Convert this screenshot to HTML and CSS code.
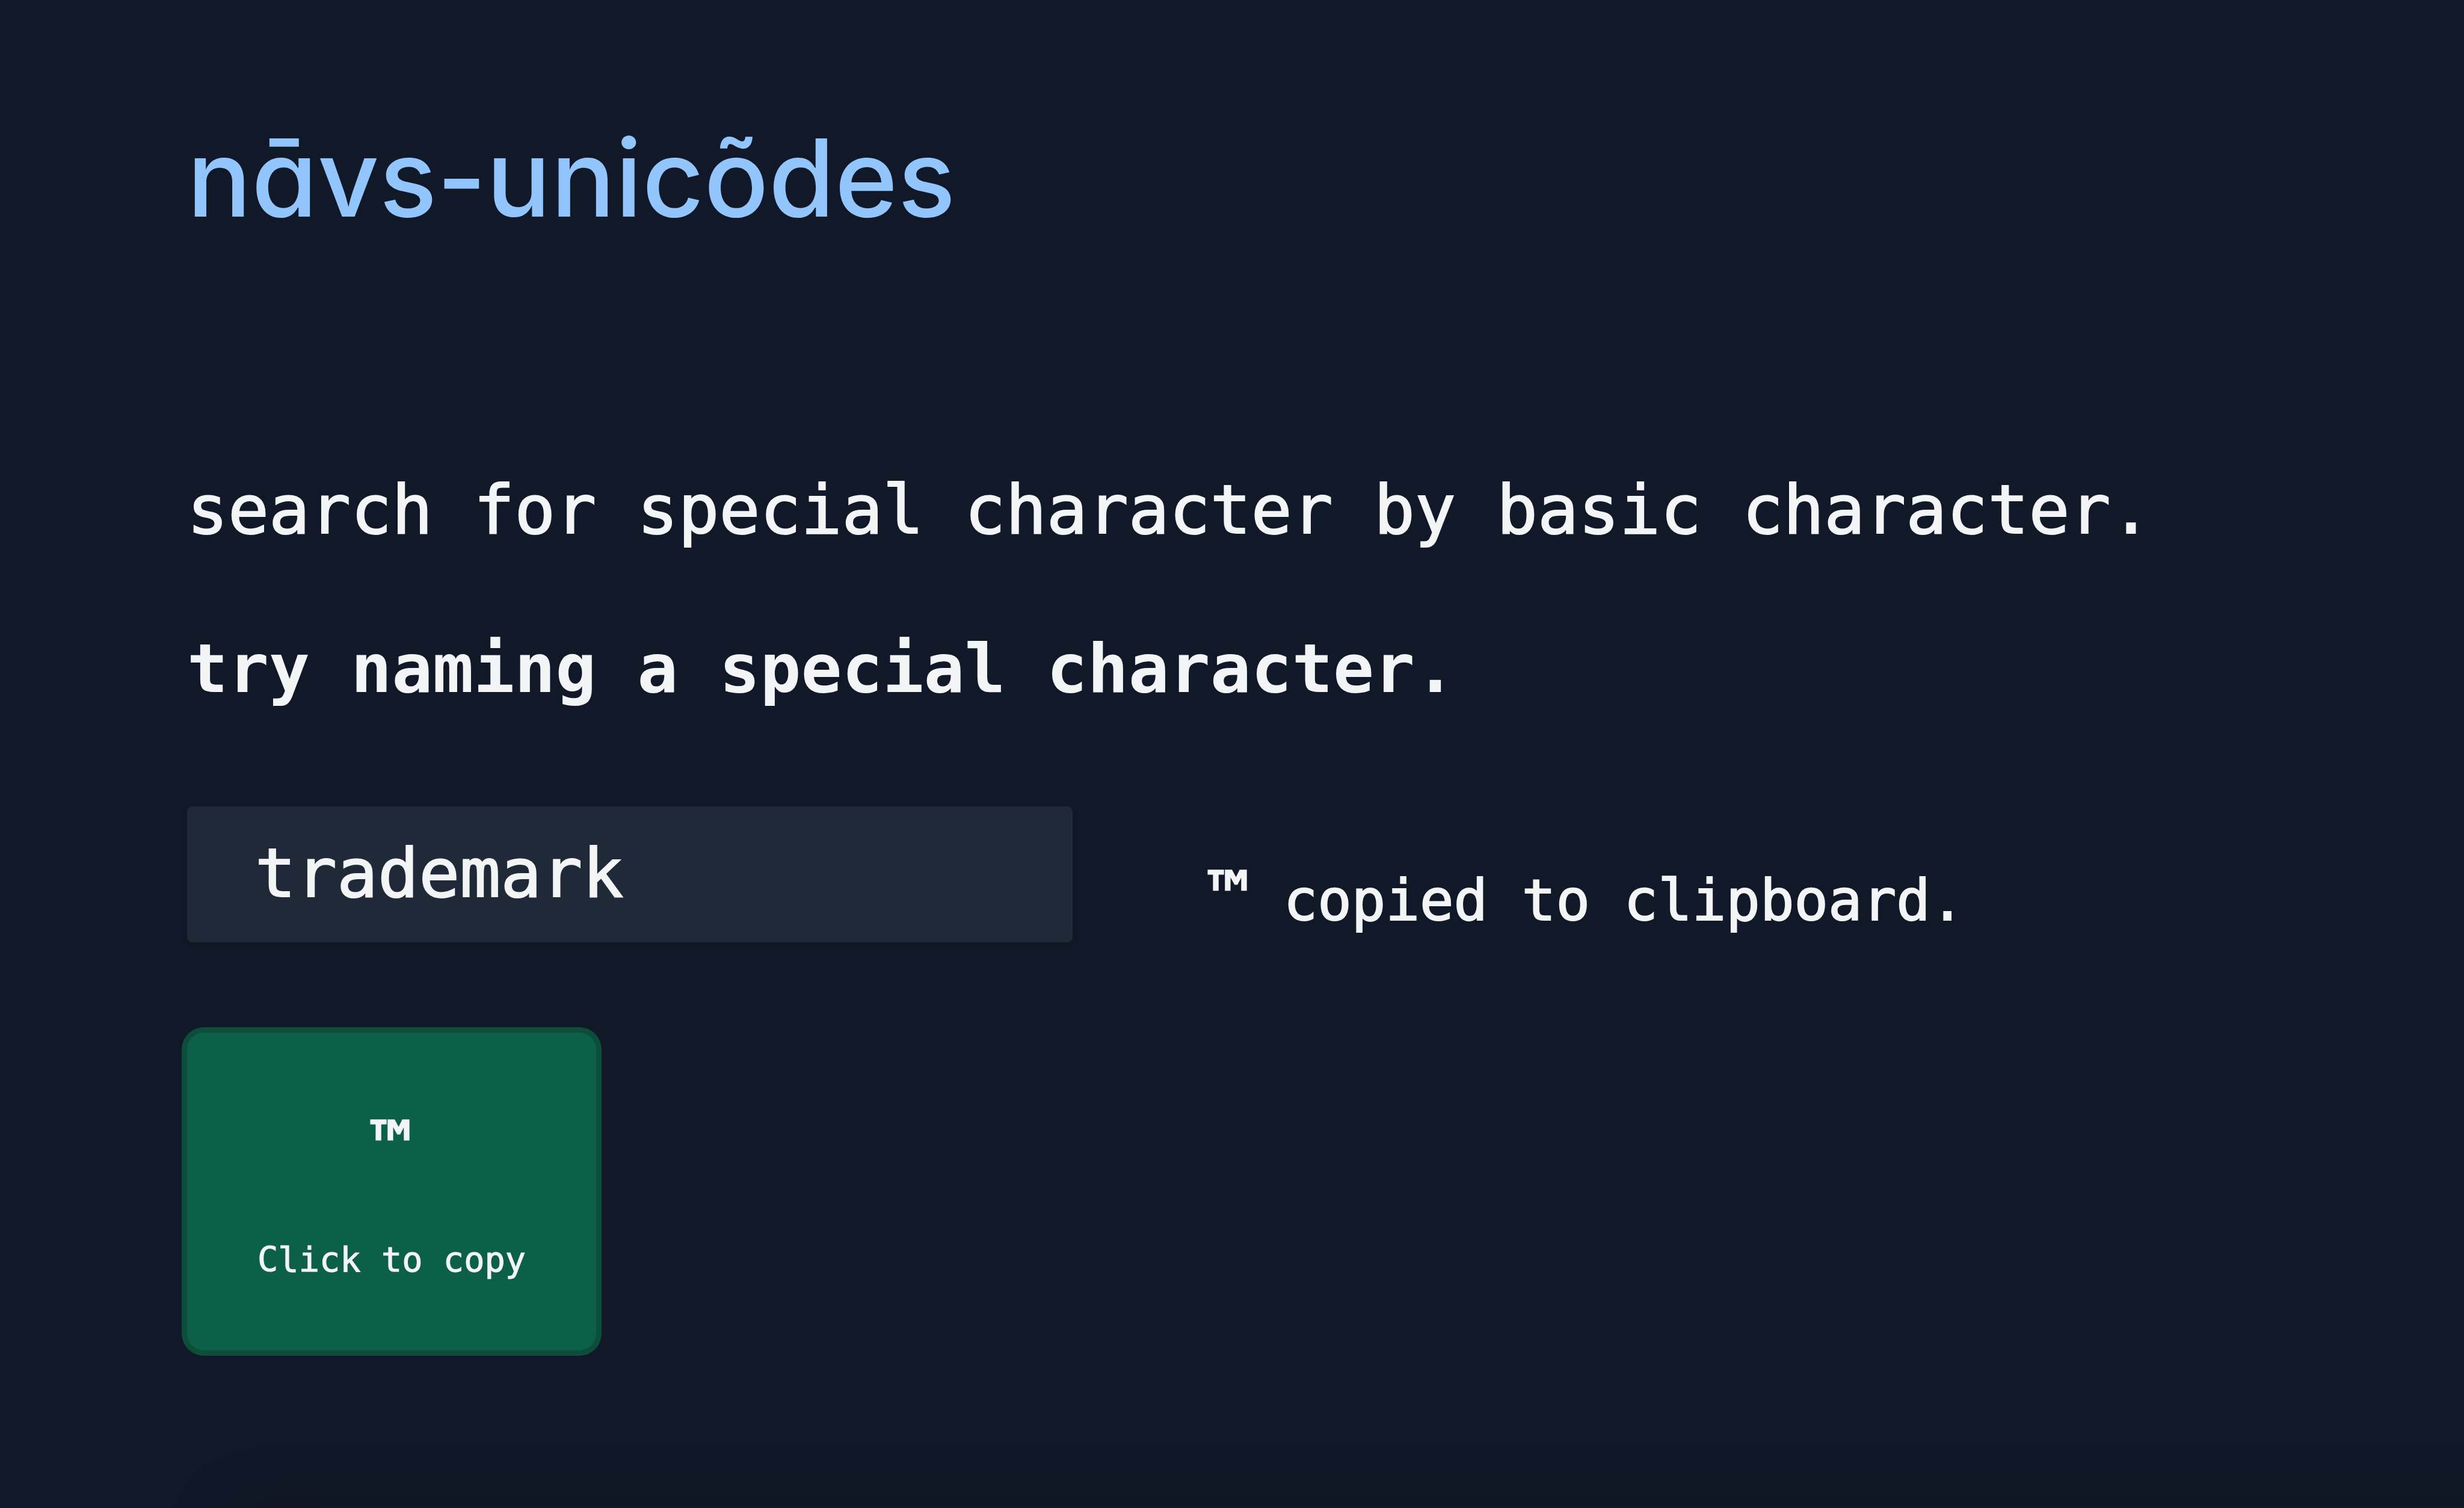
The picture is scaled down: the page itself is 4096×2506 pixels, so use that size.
FILE: index.html
```html
<!DOCTYPE html>
<html lang="en">
<head>
<meta charset="utf-8">
<title>nāvs-unicõdes</title>
<link rel="stylesheet" href="styles.css">
</head>
<body>
<main class="page">
  <h1 class="title">nāvs-unicõdes</h1>
  <p class="lead">search for special character by basic character.</p>
  <label class="prompt" for="query">try naming a special character.</label>
  <div class="search">
    <input class="field" id="query" type="text" value="trademark">
    <p class="status" role="status"><span class="symbol">™</span> copied to clipboard.</p>
  </div>
  <div class="results">
    <button class="card" type="button">
      <span class="symbol">™</span>
      <span class="hint">Click to copy</span>
    </button>
  </div>
  <div class="edge"></div>
</main>
</body>
</html>
```

FILE: styles.css
```css
* {
  box-sizing: border-box;
  margin: 0;
}

body {
  overflow-x: hidden;
  background: #111827;
  color: #f3f4f6;
  font-family: "DejaVu Sans Mono", monospace;
  font-size: 113px;
  line-height: 152px;
}

.page {
  display: flex;
  flex-direction: column;
  min-height: 100vh;
  padding: 186px 311px 0;
}

.title {
  color: #93c5fd;
  font-family: Inter, sans-serif;
  font-feature-settings: "cv11";
  font-size: 178px;
  font-weight: 500;
  line-height: 220px;
}

.lead {
  margin-top: 365px;
  -webkit-text-stroke: 2px;
}

.prompt {
  margin-top: 112px;
  font-weight: 700;
}

.search {
  display: flex;
  align-items: flex-start;
  gap: 226px;
  margin-top: 153px;
}

.field {
  width: 1472px;
  height: 226px;
  padding: 0 113px 4px;
  border: 0;
  border-radius: 9px;
  outline: 0;
  background: #1f2937;
  box-shadow: 0 5px 9px rgba(0, 0, 0, 0.05);
  color: inherit;
  font: inherit;
  -webkit-text-stroke: 2px;
}

.status {
  margin-top: 74px;
  font-size: 94px;
  -webkit-text-stroke: 2px;
}

.symbol {
  font-size: 113px;
  -webkit-text-stroke: 3px;
}

.results {
  display: flex;
  margin-top: 143px;
}

.card {
  display: flex;
  flex-direction: column;
  align-items: center;
  padding: 113px 117px;
  border: 0;
  border-radius: 28px;
  background: #0d6048;
  box-shadow: 0 0 0 9px #0d4e3b;
  color: inherit;
  font: inherit;
}

.hint {
  margin-top: 75px;
  font-size: 57px;
  line-height: 75px;
  -webkit-text-stroke: 1px;
}

/* Soft shade along the lower edge of the page. */
.edge {
  height: 1px;
  margin: auto -311px 0 219px;
  box-shadow: 0 150px 120px 150px rgba(0, 0, 0, 0.12);
}
```
